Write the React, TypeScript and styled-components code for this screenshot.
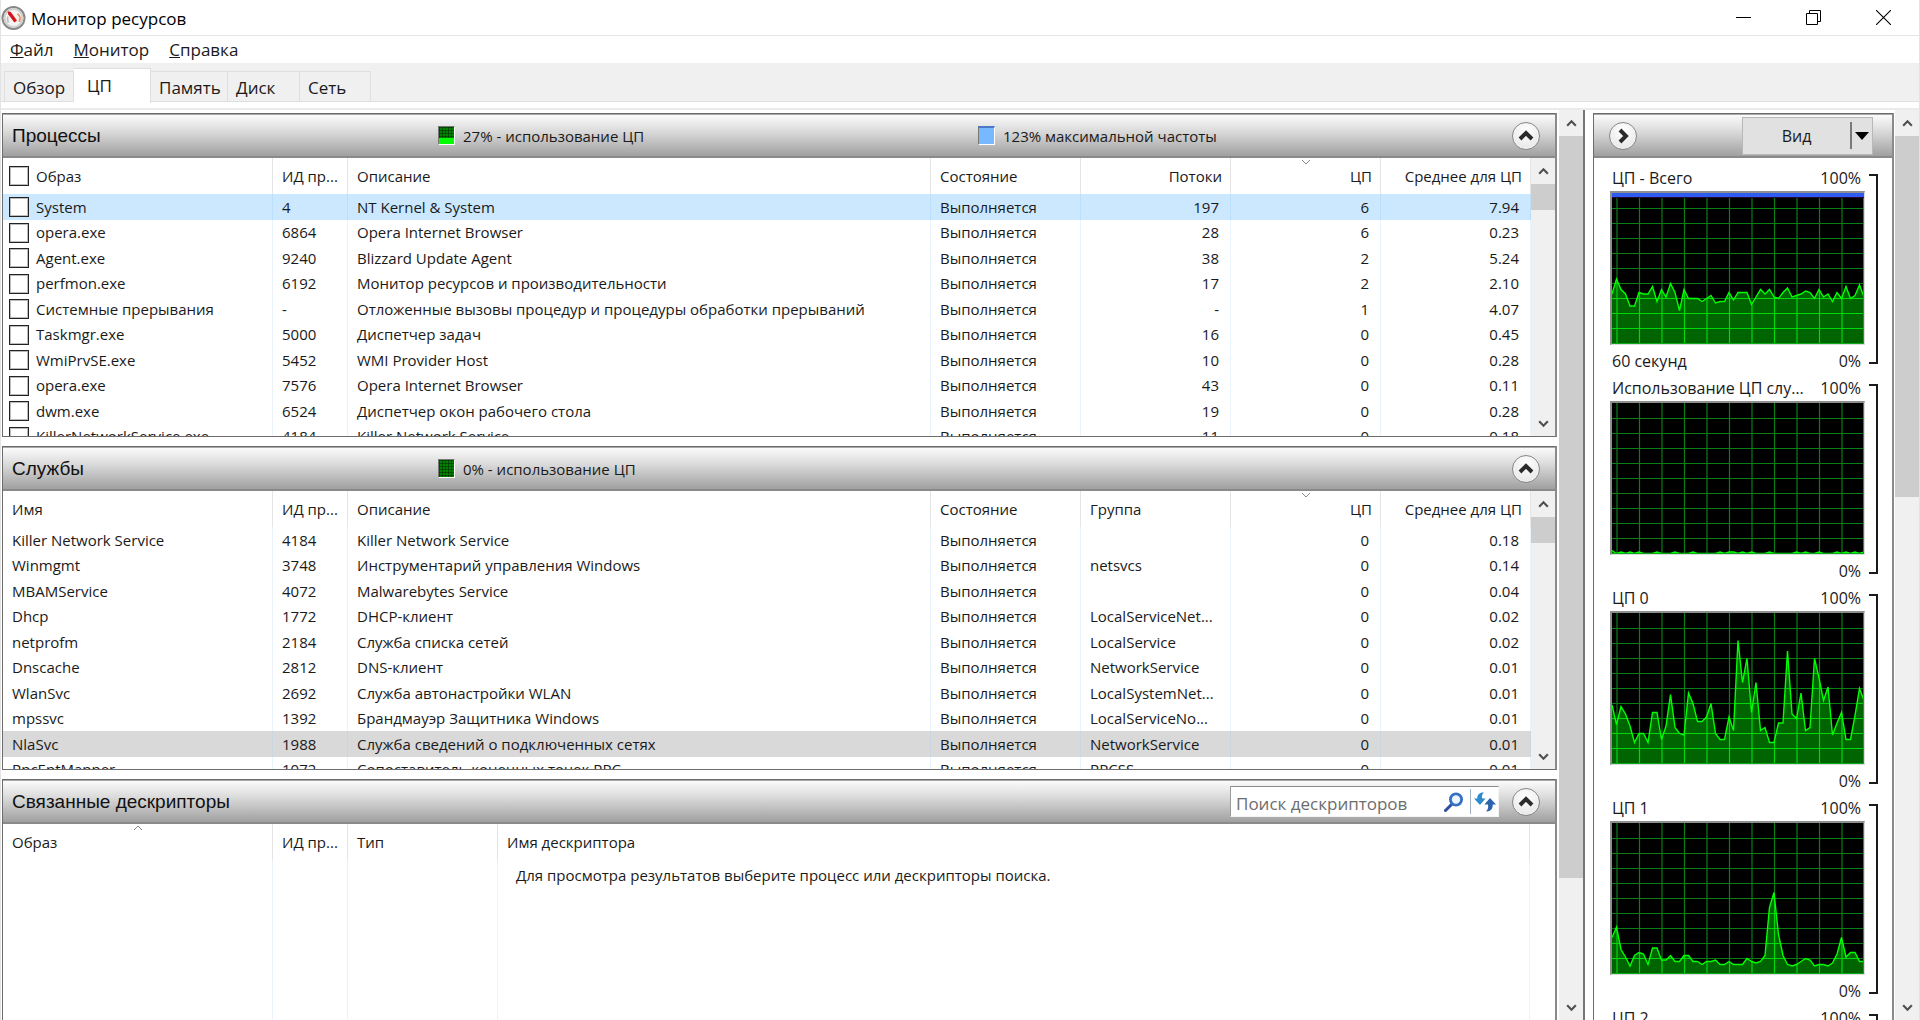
import React, { useId } from 'react';
import styled, { createGlobalStyle, css } from 'styled-components';

const GlobalStyle = createGlobalStyle`
  * { box-sizing: border-box; }
  html, body { margin: 0; padding: 0; background: #fff; }
  body, button, input, table {
    font-family: "Open Sans", "Noto Sans", sans-serif;
    font-size: 15px;
    color: #1a1a1a;
  }
  button { border: 0; padding: 0; background: none; }
`;

const Window = styled.div`
  height: 100vh;
  display: flex;
  flex-direction: column;
  overflow: hidden;
  border-left: 1px solid #e3e3e3;
  border-right: 1px solid #e3e3e3;
`;

const TitleBar = styled.header`
  flex: none;
  height: 36px;
  display: flex;
  align-items: center;
  border-bottom: 1px solid #e5e5e5;
`;

const WindowTitle = styled.h1`
  flex: 1;
  margin: 0;
  padding: 1px 0 0 5px;
  font-size: 17px;
  font-weight: 400;
  color: #000;
`;

const CaptionButton = styled.button`
  width: 70px;
  height: 32px;
  display: grid;
  place-items: center;
  &:last-child { margin-right: 1px; }
`;

const MenuBar = styled.nav`
  flex: none;
  height: 27px;
  display: flex;
  align-items: center;
  gap: 20px;
  padding: 0 9px;
`;

const MenuItem = styled.button`
  font-size: 17px;
  line-height: 26px;
  &::first-letter { text-decoration: underline; }
`;

const TabStrip = styled.div`
  flex: none;
  height: 39px;
  display: flex;
  align-items: flex-end;
  padding-left: 3px;
  background: #f0f0f0;
  border-bottom: 1px solid #dfdfdf;
`;

const Tab = styled.button<{ $active?: boolean; $width: number }>`
  width: ${p => p.$width}px;
  height: 30px;
  padding: 2px 0 0 8px;
  text-align: left;
  font-size: 17px;
  border: 1px solid #dfdfdf;
  border-width: 1px 1px 0 0;
  &:first-child { border-left-width: 1px; }
  ${p => p.$active && css`
    height: 35px;
    margin-bottom: -2px;
    padding: 0 0 2px 13px;
    background: #fff;
  `}
`;

const TabPageEdge = styled.div`
  flex: none;
  height: 8px;
  border-bottom: 2px solid #ebebeb;
`;

const Body = styled.main`
  flex: 1;
  min-height: 0;
  display: flex;
`;

const Sections = styled.div`
  flex: 1;
  min-width: 0;
  display: flex;
  flex-direction: column;
  gap: 9px;
  padding: 3px 2px 0 1px;
  overflow: hidden;
`;

const Splitter = styled.div`
  flex: none;
  width: 10px;
  border-left: 2px solid #767676;
`;

const Panel = styled.section`
  flex: none;
  height: 324px;
  display: flex;
  flex-direction: column;
  border: 1px solid #6c6c6c;
  border-right: 2px solid #8a8a8a;
  overflow: hidden;
`;

const headerBar = css`
  flex: none;
  height: 44px;
  background: linear-gradient(#fbfbfb, #dadada 40%, #a0a0a0);
  border-top: 1px solid #a8a8a8;
  border-bottom: 2px solid #8a8a8a;
`;

const PanelHeader = styled.header`
  ${headerBar}
  display: grid;
  grid-template-columns: 426px 540px 1fr auto;
  align-items: center;
  padding: 0 15px 0 9px;
`;

const PanelTitle = styled.h2`
  margin: 0;
  font-family: "Liberation Sans", Arial, sans-serif;
  font-size: 19px;
  font-weight: 400;
  white-space: nowrap;
  color: #111;
`;

const Meter = styled.div`
  display: flex;
  align-items: center;
  gap: 8px;
  white-space: nowrap;
`;

const Swatch = styled.span<{ $level?: number; $solid?: boolean }>`
  width: 17px;
  height: 19px;
  border: 1px solid;
  border-color: #777 #fff #fff #777;
  ${p => p.$solid
    ? css`
        background: #78b8ff;
        border-top: 2px solid #4c78c8;
      `
    : css`
        background:
          linear-gradient(#00ff00, #00ff00) bottom / 100% ${p.$level ?? 0}px no-repeat,
          repeating-linear-gradient(90deg, rgba(0, 30, 0, 0.5) 0 1px, transparent 1px 3px),
          repeating-linear-gradient(#005200 0 1px, #008400 1px 3px);
      `}
`;

const RoundButton = styled.button`
  width: 28px;
  height: 28px;
  display: grid;
  place-items: center;
  border: 1px solid #868686;
  border-radius: 50%;
  background: radial-gradient(circle at 50% 30%, #fff, #e2e2e2);
  box-shadow: inset 0 0 0 1px #f6f6f6;
`;

const PanelBody = styled.div`
  flex: 1;
  min-height: 0;
  display: flex;
`;

const TableClip = styled.div`
  flex: 1;
  min-width: 0;
  overflow: hidden;
`;

const Table = styled.table<{ $fill?: boolean }>`
  width: 100%;
  ${p => p.$fill && css`height: 100%;`}
  table-layout: fixed;
  border-collapse: separate;
  border-spacing: 0;
`;

const Th = styled.th<{ $right?: boolean }>`
  position: relative;
  height: 36px;
  padding: ${p => (p.$right ? '0 8px 0 0' : '0 0 0 9px')};
  text-align: ${p => (p.$right ? 'right' : 'left')};
  font-weight: 400;
  white-space: nowrap;
  overflow: hidden;
  border-right: 1px solid #e5e5e5;
`;

const Td = styled.td<{ $right?: boolean }>`
  padding: ${p => (p.$right ? '0 11px 0 0' : '0 0 0 9px')};
  text-align: ${p => (p.$right ? 'right' : 'left')};
  line-height: 25px;
  white-space: nowrap;
  overflow: hidden;
  text-overflow: ellipsis;
  border-right: 1px solid #eaf3fc;
`;

const Tr = styled.tr<{ $tone?: 'selected' | 'muted' }>`
  height: 25px;
  &:nth-child(odd) { height: 26px; }
  ${p => p.$tone === 'selected' && css`
    background: #cce8ff;
    td { border-color: #bcdffb; }
  `}
  ${p => p.$tone === 'muted' && css`
    background: #d9d9d9;
    td { border-color: #cad6e0; }
  `}
`;

const CheckLabel = styled.label`
  display: flex;
  align-items: center;
  gap: 7px;
  margin-left: -3px;
`;

const CheckBox = styled.input`
  appearance: none;
  flex: none;
  width: 20px;
  height: 20px;
  margin: 0;
  background: #fff;
  border: 1px solid #222;
  box-shadow: inset 0 0 0 1px #bbb;
`;

const SortGlyph = styled.svg`
  position: absolute;
  top: 1px;
  left: calc(50% - 5px);
`;

const Message = styled(Td)`
  padding-left: 18px;
  padding-top: 3px;
  vertical-align: top;
`;

const Bar = styled.div`
  flex: none;
  width: 24px;
  display: flex;
  flex-direction: column;
  background: #f0f0f0;
`;

const BarButton = styled.button`
  height: 26px;
  display: grid;
  place-items: center;
`;

const Thumb = styled.div<{ $size: string }>`
  height: ${p => p.$size};
  background: #cdcdcd;
`;

const Grow = styled.div`
  flex: 1;
`;

const Search = styled.form`
  grid-column: 3;
  justify-self: end;
  width: 269px;
  height: 31px;
  margin-right: 13px;
  display: flex;
  align-items: center;
  background: #fff;
  border: 1px solid;
  border-color: #8c8c8c #f4f4f4 #f4f4f4 #9a9a9a;
`;

const SearchInput = styled.input`
  flex: 1;
  min-width: 0;
  height: 100%;
  padding: 4px 0 0 5px;
  border: 0;
  outline: 0;
  background: transparent;
  font-size: 17px;
  &::placeholder { color: #6d6d6d; opacity: 1; }
`;

const SearchButton = styled.button<{ $divided?: boolean }>`
  width: ${p => (p.$divided ? 28 : 32)}px;
  height: 25px;
  display: grid;
  place-items: center;
  ${p => p.$divided && css`border-left: 1px solid #9fb2c4;`}
`;

const Side = styled.aside`
  flex: none;
  width: 301px;
  margin: 3px 1px 0 0;
  display: flex;
  flex-direction: column;
  border: 1px solid #6c6c6c;
  border-right: 2px solid #8a8a8a;
  border-bottom: 0;
  overflow: hidden;
`;

const SideHeader = styled.header`
  ${headerBar}
  display: flex;
  align-items: center;
  justify-content: space-between;
  padding: 0 19px 0 15px;
`;

const ViewButton = styled.button`
  width: 131px;
  height: 38px;
  display: grid;
  grid-template-columns: 1fr 22px;
  align-items: center;
  background: #e1e1e1;
  border: 1px solid #b8b8b8;
  font-size: 16px;
`;

const ViewArrow = styled.span`
  height: 27px;
  display: grid;
  place-items: center;
  border-left: 2px solid #7a7a7a;
`;

const ChartList = styled.div`
  flex: 1;
  min-height: 0;
  padding: 8px 14px 0 16px;
  overflow: hidden;
`;

const ChartBlock = styled.figure`
  height: 210px;
  margin: 0;
  display: flex;
  gap: 4px;
`;

const ChartMain = styled.div`
  flex: 1;
  min-width: 0;
`;

const ChartCaption = styled.figcaption`
  height: 25px;
  display: flex;
  justify-content: space-between;
  gap: 8px;
  padding: 0 4px 0 2px;
  font-size: 16px;
  line-height: 24px;
`;

const ChartName = styled.span`
  overflow: hidden;
  text-overflow: ellipsis;
  white-space: nowrap;
`;

const ChartFooter = styled(ChartCaption).attrs({ as: 'div' })`
  margin-top: 4px;
`;

const ChartFrame = styled.div`
  height: 154px;
  border: 2px solid;
  border-color: #8f8f8f #dcdcdc #dcdcdc #8f8f8f;
  border-right-width: 1px;
  border-bottom-width: 1px;
  background: #000;
`;

const Bracket = styled.div`
  width: 9px;
  height: 190px;
  margin-top: 8px;
  border: 2px solid #1a1a1a;
  border-left: 0;
`;

const Chevron = ({ dir, size = 12, color = '#505050', width = 2 }: {
  dir: 'up' | 'down' | 'right'; size?: number; color?: string; width?: number;
}) => (
  <svg width={size} height={size} viewBox="0 0 12 12" fill="none" stroke={color} strokeWidth={width} aria-hidden>
    {dir === 'up' && <path d="M2 8 6 4 10 8" />}
    {dir === 'down' && <path d="M2 4 6 8 10 4" />}
    {dir === 'right' && <path d="M4 2 8 6 4 10" />}
  </svg>
);

const ScrollBar = ({ thumb }: { thumb: string }) => (
  <Bar>
    <BarButton aria-label="Прокрутить вверх"><Chevron dir="up" size={13} /></BarButton>
    <Thumb $size={thumb} />
    <Grow />
    <BarButton aria-label="Прокрутить вниз"><Chevron dir="down" size={13} /></BarButton>
  </Bar>
);

const Collapse = () => (
  <RoundButton aria-label="Свернуть"><Chevron dir="up" size={18} color="#2b2b2b" width={2.6} /></RoundButton>
);

const Sort = ({ up }: { up?: boolean }) => (
  <SortGlyph width="10" height="6" viewBox="0 0 10 6" fill="none" stroke="#8a8a8a" aria-hidden>
    <path d={up ? 'M1 5 5 1 9 5' : 'M1 1 5 5 9 1'} />
  </SortGlyph>
);

const AppIcon = () => (
  <svg width="25" height="26" viewBox="0 0 25 26" aria-hidden>
    <circle cx="12.5" cy="13" r="11" fill="#f4f4f2" stroke="#858886" strokeWidth="2" />
    <circle cx="12.5" cy="13" r="9" fill="none" stroke="#cfcfcc" strokeWidth="2" />
    <path d="M7.5 17.5a7 7 0 0 1-.6-6" fill="none" stroke="#bdbdb8" strokeWidth="1.6" />
    <path d="M16.5 8.8a6 6 0 0 1 1.6 8" fill="none" stroke="#ee9468" strokeWidth="2" />
    <path d="M6.5 6.2 9.8 7 16 15.6 13.4 17.4 7.2 9.2Z" fill="#d4161c" />
  </svg>
);

const GREEN_GRID = '#0a7d14';

function Chart({ name, data, footer, limit }: { name: string; data: number[]; footer?: string; limit?: boolean }) {
  const clip = useId();
  const points = data.map((v, i) => `${i * 4.5},${150.5 - v * 1.5}`).join(' ');
  const area = `0,151 ${points} 252,151`;
  const grid = [
    ...Array.from({ length: 11 }, (_, i) => `M${5 + i * 22.5} 0V151`),
    ...Array.from({ length: 9 }, (_, i) => `M0 ${15.5 + i * 15}H252`),
  ].join('');
  return (
    <ChartBlock>
      <ChartMain>
        <ChartCaption><ChartName>{name}</ChartName><span>100%</span></ChartCaption>
        <ChartFrame>
          <svg width="100%" height="151" viewBox="0 0 252 151" preserveAspectRatio="none" display="block" aria-hidden>
            <clipPath id={clip}><polygon points={area} /></clipPath>
            <path d={grid} stroke={GREEN_GRID} strokeWidth="1.2" fill="none" />
            <polygon points={area} fill="#006400" />
            <path d={grid} stroke="#00d80c" strokeWidth="1.2" fill="none" clipPath={`url(#${clip})`} />
            <polyline points={points} fill="none" stroke="#00ff00" strokeWidth="1.4" />
            <path d="M0 150.5H252M251.5 0V151" stroke="#0aa818" />
            {limit && <path d="M0 2H252" stroke="#2f5cf0" strokeWidth="4" />}
            {limit && <path d="M0 4.5H252" stroke="#2a0838" />}
          </svg>
        </ChartFrame>
        <ChartFooter><span>{footer}</span><span>0%</span></ChartFooter>
      </ChartMain>
      <Bracket />
    </ChartBlock>
  );
}

const total = [33,43,36,33,25,25,34,33,33,38,28,36,31,40,34,22,36,30,30,30,28,30,32,27,28,28,34,29,34,34,34,26,31,36,33,36,31,30,34,37,31,32,33,35,34,30,36,31,33,28,34,30,38,30,32,39,31];
const services = [2,0,1,0,1,0,1,0,0,0,1,0,0,0,1,0,0,0,1,0,0,0,0,0,1,0,1,1,0,1,0,1,0,0,0,1,0,0,0,0,0,1,0,1,0,0,1,0,0,0,1,0,1,0,1,0,1];
const core0 = [39,26,38,33,25,14,20,20,14,34,34,16,25,46,24,20,19,47,40,28,28,31,40,20,16,16,31,22,82,54,70,34,54,22,24,14,14,27,27,75,33,30,47,22,24,70,57,42,51,19,27,34,16,16,32,50,42];
const core1 = [24,31,16,11,5,12,14,13,6,17,17,9,9,12,8,8,12,12,8,8,6,8,8,9,6,6,8,6,6,6,10,8,7,8,12,44,54,26,12,6,5,6,8,10,9,5,6,6,5,7,13,24,11,14,14,8,8];

const RUN = 'Выполняется';

const processes = [
  ['System', '4', 'NT Kernel & System', '197', '6', '7.94'],
  ['opera.exe', '6864', 'Opera Internet Browser', '28', '6', '0.23'],
  ['Agent.exe', '9240', 'Blizzard Update Agent', '38', '2', '5.24'],
  ['perfmon.exe', '6192', 'Монитор ресурсов и производительности', '17', '2', '2.10'],
  ['Системные прерывания', '-', 'Отложенные вызовы процедур и процедуры обработки прерываний', '-', '1', '4.07'],
  ['Taskmgr.exe', '5000', 'Диспетчер задач', '16', '0', '0.45'],
  ['WmiPrvSE.exe', '5452', 'WMI Provider Host', '10', '0', '0.28'],
  ['opera.exe', '7576', 'Opera Internet Browser', '43', '0', '0.11'],
  ['dwm.exe', '6524', 'Диспетчер окон рабочего стола', '19', '0', '0.28'],
  ['KillerNetworkService.exe', '4184', 'Killer Network Service', '11', '0', '0.18'],
];

const serviceRows = [
  ['Killer Network Service', '4184', 'Killer Network Service', '', '0', '0.18'],
  ['Winmgmt', '3748', 'Инструментарий управления Windows', 'netsvcs', '0', '0.14'],
  ['MBAMService', '4072', 'Malwarebytes Service', '', '0', '0.04'],
  ['Dhcp', '1772', 'DHCP-клиент', 'LocalServiceNet...', '0', '0.02'],
  ['netprofm', '2184', 'Служба списка сетей', 'LocalService', '0', '0.02'],
  ['Dnscache', '2812', 'DNS-клиент', 'NetworkService', '0', '0.01'],
  ['WlanSvc', '2692', 'Служба автонастройки WLAN', 'LocalSystemNet...', '0', '0.01'],
  ['mpssvc', '1392', 'Брандмауэр Защитника Windows', 'LocalServiceNo...', '0', '0.01'],
  ['NlaSvc', '1988', 'Служба сведений о подключенных сетях', 'NetworkService', '0', '0.01'],
  ['RpcEptMapper', '1072', 'Сопоставитель конечных точек RPC', 'RPCSS', '0', '0.01'],
];

const Columns = ({ widths }: { widths: (number | undefined)[] }) => (
  <colgroup>{widths.map((w, i) => <col key={i} width={w} />)}</colgroup>
);

const LIST_COLUMNS = [270, 75, undefined, 150, 150, 150, 150];

export default function App() {
  return (
    <Window>
      <GlobalStyle />
      <TitleBar>
        <AppIcon />
        <WindowTitle>Монитор ресурсов</WindowTitle>
        <CaptionButton aria-label="Свернуть окно">
          <svg width="15" height="15" stroke="#000"><path d="M0 7.5H15" /></svg>
        </CaptionButton>
        <CaptionButton aria-label="Восстановить окно">
          <svg width="15" height="15" fill="none" stroke="#000"><path d="M.5 3.5H11.5V14.5H.5ZM3.5 3V.5H14.5V11.5H12" /></svg>
        </CaptionButton>
        <CaptionButton aria-label="Закрыть окно">
          <svg width="15" height="15" stroke="#000" strokeWidth="1.1"><path d="M0 0 15 15M15 0 0 15" /></svg>
        </CaptionButton>
      </TitleBar>
      <MenuBar>
        <MenuItem>Файл</MenuItem>
        <MenuItem>Монитор</MenuItem>
        <MenuItem>Справка</MenuItem>
      </MenuBar>
      <TabStrip role="tablist">
        <Tab role="tab" $width={70}>Обзор</Tab>
        <Tab role="tab" aria-selected $active $width={77}>ЦП</Tab>
        <Tab role="tab" $width={77}>Память</Tab>
        <Tab role="tab" $width={72}>Диск</Tab>
        <Tab role="tab" $width={71}>Сеть</Tab>
      </TabStrip>
      <TabPageEdge />
      <Body>
        <Sections>
          <Panel>
            <PanelHeader>
              <PanelTitle>Процессы</PanelTitle>
              <Meter><Swatch $level={6} />27% - использование ЦП</Meter>
              <Meter><Swatch $solid />123% максимальной частоты</Meter>
              <Collapse />
            </PanelHeader>
            <PanelBody>
              <TableClip>
                <Table>
                  <Columns widths={LIST_COLUMNS} />
                  <thead>
                    <tr>
                      <Th><CheckLabel><CheckBox type="checkbox" />Образ</CheckLabel></Th>
                      <Th>ИД пр...</Th>
                      <Th>Описание</Th>
                      <Th>Состояние</Th>
                      <Th $right>Потоки</Th>
                      <Th $right><Sort />ЦП</Th>
                      <Th $right>Среднее для ЦП</Th>
                    </tr>
                  </thead>
                  <tbody>
                    {processes.map(([name, pid, about, threads, cpu, avg], i) => (
                      <Tr key={pid} $tone={i === 0 ? 'selected' : undefined}>
                        <Td><CheckLabel><CheckBox type="checkbox" />{name}</CheckLabel></Td>
                        <Td>{pid}</Td>
                        <Td>{about}</Td>
                        <Td>{RUN}</Td>
                        <Td $right>{threads}</Td>
                        <Td $right>{cpu}</Td>
                        <Td $right>{avg}</Td>
                      </Tr>
                    ))}
                  </tbody>
                </Table>
              </TableClip>
              <ScrollBar thumb="26px" />
            </PanelBody>
          </Panel>

          <Panel>
            <PanelHeader>
              <PanelTitle>Службы</PanelTitle>
              <Meter><Swatch />0% - использование ЦП</Meter>
              <span />
              <Collapse />
            </PanelHeader>
            <PanelBody>
              <TableClip>
                <Table>
                  <Columns widths={LIST_COLUMNS} />
                  <thead>
                    <tr>
                      <Th>Имя</Th>
                      <Th>ИД пр...</Th>
                      <Th>Описание</Th>
                      <Th>Состояние</Th>
                      <Th>Группа</Th>
                      <Th $right><Sort />ЦП</Th>
                      <Th $right>Среднее для ЦП</Th>
                    </tr>
                  </thead>
                  <tbody>
                    {serviceRows.map(([name, pid, about, group, cpu, avg]) => (
                      <Tr key={name} $tone={name === 'NlaSvc' ? 'muted' : undefined}>
                        <Td>{name}</Td>
                        <Td>{pid}</Td>
                        <Td>{about}</Td>
                        <Td>{RUN}</Td>
                        <Td>{group}</Td>
                        <Td $right>{cpu}</Td>
                        <Td $right>{avg}</Td>
                      </Tr>
                    ))}
                  </tbody>
                </Table>
              </TableClip>
              <ScrollBar thumb="26px" />
            </PanelBody>
          </Panel>

          <Panel>
            <PanelHeader>
              <PanelTitle>Связанные дескрипторы</PanelTitle>
              <Search>
                <SearchInput placeholder="Поиск дескрипторов" aria-label="Поиск дескрипторов" />
                <SearchButton type="button" aria-label="Найти">
                  <svg width="20" height="20" viewBox="0 0 20 20" fill="none">
                    <path d="M1.5 18.5 8 12" stroke="#2a4f9c" strokeWidth="3" strokeLinecap="round" />
                    <circle cx="12" cy="7.5" r="5.6" fill="#eef6fd" stroke="#3470c4" strokeWidth="2.8" />
                  </svg>
                </SearchButton>
                <SearchButton type="button" $divided aria-label="Обновить">
                  <svg width="22" height="20" viewBox="0 0 22 20">
                    <path d="M10 .5C5.5 .2 3 3 3.3 6.5H0L6 13 11.6 6.5H8.3C7.5 4.5 8 2.2 10 .5Z" fill="#2f8ccc" />
                    <path d="M12 19.5C16.5 19.8 19 16.5 18.7 12.5H22L16 6 10.4 12.5H14C14.5 15 14 17.8 12 19.5Z" fill="#2c62ae" />
                  </svg>
                </SearchButton>
              </Search>
              <Collapse />
            </PanelHeader>
            <PanelBody>
              <TableClip>
                <Table $fill>
                  <Columns widths={[270, 75, 150, undefined, 25]} />
                  <thead>
                    <tr>
                      <Th><Sort up />Образ</Th>
                      <Th>ИД пр...</Th>
                      <Th>Тип</Th>
                      <Th>Имя дескриптора</Th>
                      <td />
                    </tr>
                  </thead>
                  <tbody>
                    <tr>
                      <Td /><Td /><Td />
                      <Message>Для просмотра результатов выберите процесс или дескрипторы поиска.</Message>
                      <td />
                    </tr>
                  </tbody>
                </Table>
              </TableClip>
            </PanelBody>
          </Panel>
        </Sections>
        <ScrollBar thumb="81.5%" />
        <Splitter />
        <Side>
          <SideHeader>
            <RoundButton aria-label="Скрыть графики"><Chevron dir="right" size={18} color="#2b2b2b" width={2.6} /></RoundButton>
            <ViewButton>
              Вид
              <ViewArrow><svg width="14" height="8"><path d="M0 0H14L7 8Z" fill="#000" /></svg></ViewArrow>
            </ViewButton>
          </SideHeader>
          <ChartList>
            <Chart name="ЦП - Всего" data={total} footer="60 секунд" limit />
            <Chart name="Использование ЦП служб" data={services} />
            <Chart name="ЦП 0" data={core0} />
            <Chart name="ЦП 1" data={core1} />
            <Chart name="ЦП 2" data={core0} />
          </ChartList>
        </Side>
        <ScrollBar thumb="39.7%" />
      </Body>
    </Window>
  );
}
